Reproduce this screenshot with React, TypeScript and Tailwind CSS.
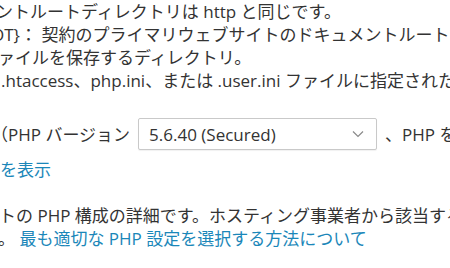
export default function App() {
  const font = "font-['Open_Sans','Noto_Sans_CJK_JP',sans-serif]";
  return (
    <div className={`h-[268px] w-[450px] overflow-hidden bg-white text-[17px] leading-[23px] text-[#333] ${font}`}>
      {/* 説明テキスト */}
      <div className="whitespace-nowrap">
        <div className="-ml-[4px]">ントルートディレクトリは http と同じです。</div>
        <div className="-ml-[9px]">{"OT}： 契約のプライマリウェブサイトのドキュメントルートディレクトリ"}</div>
        <div className="-ml-[2px]">ァイルを保存するディレクトリ。</div>
        <div className="pl-[1px]"> .htaccess、php.ini、または .user.ini ファイルに指定された値</div>
      </div>

      {/* PHP バージョン */}
      <div className="mt-[26px] flex h-8 items-center whitespace-nowrap">
        <span className="-ml-[9px]">（PHP バージョン</span>
        <div className="ml-[8px] flex h-8 w-[239px] shrink-0 items-center justify-between rounded-[2px] border border-[#c9c9c9] bg-white pl-[10px] pr-[12px] shadow-[0_1px_1px_rgba(0,0,0,0.06)]">
          <span>5.6.40 (Secured)</span>
          <svg width="12" height="8" viewBox="0 0 12 8" fill="none" stroke="#8a8a8a" strokeWidth="1.2">
            <path d="M1 1.5l5 5 5-5" />
          </svg>
        </div>
        <span className="ml-[8px]">、PHP を使用</span>
      </div>

      <div className="mt-[8px] whitespace-nowrap text-[#1b87b9]">を表示</div>

      <div className="mt-[23px] whitespace-nowrap">
        <div className="-ml-[1px]">トの PHP 構成の詳細です。ホスティング事業者から該当する</div>
        <div className="-ml-[2px]">
          。 <span className="text-[#1b87b9]">最も適切な PHP 設定を選択する方法について</span>
        </div>
      </div>
    </div>
  );
}
